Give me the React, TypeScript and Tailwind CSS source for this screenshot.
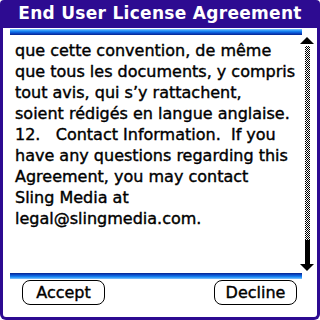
const lines = [
  'que cette convention, de même',
  'que tous les documents, y compris',
  'tout avis, qui s’y rattachent,',
  'soient rédigés en langue anglaise.',
  '12.   Contact Information.  If you',
  'have any questions regarding this',
  'Agreement, you may contact',
  'Sling Media at',
  'legal@slingmedia.com.',
]

function Arrow({ down }: { down?: boolean }) {
  return (
    <svg width="14" height="7" viewBox="0 0 14 7" className="block">
      {down ? <polygon points="0,0 14,0 7,7" fill="#000" /> : <polygon points="7,0 14,7 0,7" fill="#000" />}
    </svg>
  )
}

export default function App() {
  return (
    <div className="w-[320px] h-[320px] bg-white flex flex-col font-['DejaVu_Sans',sans-serif] text-black">
      <div className="h-[28px] shrink-0 rounded-t-[4px] bg-[#2d0b91] flex items-center justify-center text-white font-bold text-[17px] tracking-[0.3px]">
        End User License Agreement
      </div>
      <div className="flex-1 flex flex-col border-x-[3px] border-b-[3px] border-[#2d0b91] rounded-b-[6px]">
        <div className="ml-[7px] mt-[1px] w-[292px] h-[6px] bg-[linear-gradient(to_bottom,#8cc8ff,#1a8cf5,#0a4fd0,#06238c)]" />
        <div className="flex h-[237px]">
          <div className="w-[285px] pl-[12px] pt-[5px] text-[16px] leading-[21px] whitespace-pre [-webkit-text-stroke:0.4px_black]">
            {lines.map((l, i) => (
              <div key={i}>{l}</div>
            ))}
          </div>
          <div className="w-[14px] ml-[12px] flex flex-col items-center pt-[2px] pb-[1px]">
            <Arrow />
            <div className="w-[5px] mt-[2px] flex-1 bg-[repeating-conic-gradient(#000_0_25%,#fff_0_50%)] bg-[length:2px_2px]" />
            <div className="w-[5px] h-[24px] bg-black" />
            <Arrow down />
          </div>
        </div>
        <div className="ml-[7px] mt-[1px] w-[292px] h-[6px] bg-[linear-gradient(to_top,#8cc8ff,#1a8cf5,#0a4fd0,#06238c)]" />
        <div className="flex justify-between pl-[19px] pr-[20px] pt-[1px]">
          <button className="w-[83px] h-[25px] border-[1.5px] border-black rounded-[8px] text-[16px] leading-none [-webkit-text-stroke:0.4px_black]">
            Accept
          </button>
          <button className="w-[83px] h-[25px] border-[1.5px] border-black rounded-[8px] text-[16px] leading-none [-webkit-text-stroke:0.4px_black]">
            Decline
          </button>
        </div>
      </div>
    </div>
  )
}
